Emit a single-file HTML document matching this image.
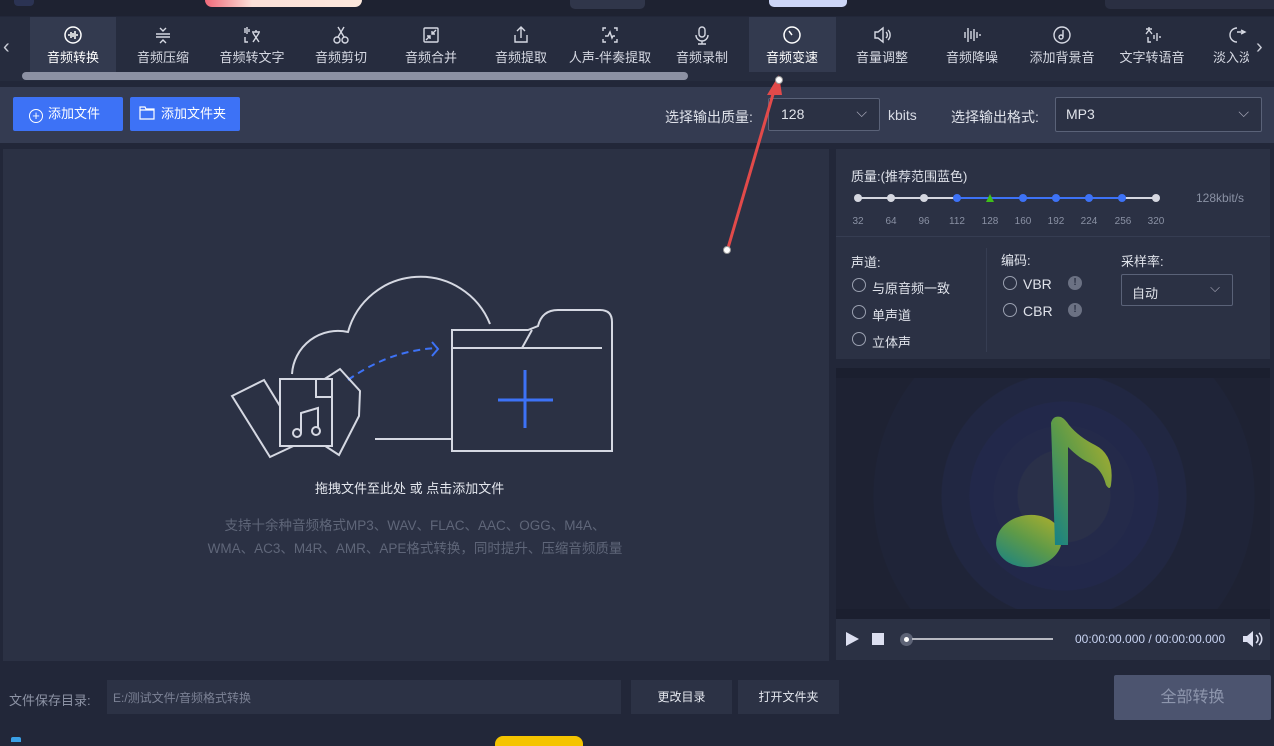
<!DOCTYPE html>
<html><head><meta charset="utf-8"><style>
*{margin:0;padding:0;box-sizing:border-box}
body{width:1274px;height:742px;background:#222739;font-family:"Liberation Sans","Noto Sans CJK SC",sans-serif;position:relative;overflow:hidden;color:#dfe3ee}
.a{position:absolute}
.tab{position:absolute;top:17px;height:55px;width:88px;text-align:center;font-size:13px;color:#d6d9e3;white-space:nowrap;overflow:hidden}
.tab svg{display:block;margin:8px auto 2px;width:20px;height:20px}
.btn{position:absolute;background:#3d72f6;color:#fff;font-size:13px;border-radius:2px;height:34px;line-height:34px}
.sel{position:absolute;border:1px solid #5a6278;background:#2b3144;border-radius:2px;color:#e0e3ea;font-size:14px}
.tick{position:absolute;top:216px;font-size:10px;color:#8a91a4;width:30px;text-align:center}
.dot{position:absolute;top:194px;width:8px;height:8px;border-radius:50%}
.rad{position:absolute;width:14px;height:14px;border:1px solid #9aa0b0;border-radius:50%}
.lbl{position:absolute;font-size:13px;color:#dfe2ea;white-space:nowrap}
</style></head><body>
<div class="a" style="left:0;top:0;width:1274px;height:16px;background:#1e2231"></div>
<div class="a" style="left:14px;top:0;width:20px;height:6px;background:#2b3353;border-radius:0 0 4px 4px"></div>
<div class="a" style="left:205px;top:0;width:157px;height:7px;background:linear-gradient(90deg,#f06a7a,#fbe0d8 30%,#fce8dd);border-radius:0 0 8px 8px"></div>
<div class="a" style="left:570px;top:0;width:75px;height:9px;background:#30364a;border-radius:0 0 5px 5px"></div>
<div class="a" style="left:769px;top:0;width:78px;height:7px;background:#cdd6f7;border-radius:0 0 5px 5px"></div>
<div class="a" style="left:1105px;top:0;width:169px;height:9px;background:#2a2f42;border-radius:0 0 0 5px"></div>
<div class="a" style="left:0;top:17px;width:1274px;height:64px;background:#262c3e"></div>
<div class="a" style="left:3px;top:36px;font-size:20px;color:#c9ccd6">‹</div>
<div class="a" style="left:1256px;top:36px;font-size:20px;color:#c9ccd6">›</div>
<div class="a" style="left:30px;top:17px;width:86px;height:55px;background:#333a4f"></div>
<div class="a" style="left:749px;top:17px;width:87px;height:55px;background:#333a4f"></div>
<div class="a" style="left:22px;top:72px;width:666px;height:8px;background:#8c91a3;border-radius:4px"></div>
<div class="tab" style="left:29px;color:#fff"><svg viewBox="0 0 20 20" fill="none" stroke="#fff" stroke-width="1.5"><circle cx="10" cy="10" r="8"/><path d="M6 9v2M8 7v6M10 8v4M12 6v8M14 9v2"/></svg>音频转换</div>
<div class="tab" style="left:119px"><svg viewBox="0 0 20 20" fill="none" stroke="#d6d9e3" stroke-width="1.4"><path d="M3 9h14M3 12h14M7 3l3 3 3-3M7 18l3-3 3 3"/></svg>音频压缩</div>
<div class="tab" style="left:208px"><svg viewBox="0 0 20 20" fill="none" stroke="#d6d9e3" stroke-width="1.4"><path d="M3 3v5M5 2v7M7 4v3M3 12v5h3M10 7h8M14 5v2M11 8l6 9M17 8l-6 9"/></svg>音频转文字</div>
<div class="tab" style="left:297px"><svg viewBox="0 0 20 20" fill="none" stroke="#d6d9e3" stroke-width="1.4"><circle cx="6" cy="15" r="3"/><circle cx="14" cy="15" r="3"/><path d="M7 12L13 2M13 12L7 2"/></svg>音频剪切</div>
<div class="tab" style="left:387px"><svg viewBox="0 0 20 20" fill="none" stroke="#d6d9e3" stroke-width="1.4"><rect x="3" y="3" width="14" height="14" rx="1"/><path d="M15 5l-4 4M11 6v3h3M5 15l4-4M6 11h3v3"/></svg>音频合并</div>
<div class="tab" style="left:477px"><svg viewBox="0 0 20 20" fill="none" stroke="#d6d9e3" stroke-width="1.4"><path d="M4 10v7h12v-7M10 13V2M6 6l4-4 4 4"/></svg>音频提取</div>
<div class="tab" style="left:566px"><svg viewBox="0 0 20 20" fill="none" stroke="#d6d9e3" stroke-width="1.4"><path d="M3 6V3h3M14 3h3v3M3 14v3h3M17 14v3h-3M5 11h3l2-4 2 6 1-2h2"/></svg>人声-伴奏提取</div>
<div class="tab" style="left:658px"><svg viewBox="0 0 20 20" fill="none" stroke="#d6d9e3" stroke-width="1.4"><rect x="7" y="2" width="6" height="10" rx="3"/><path d="M4 10a6 6 0 0012 0M10 16v3M6 19h8"/></svg>音频录制</div>
<div class="tab" style="left:748px;color:#fff"><svg viewBox="0 0 20 20" fill="none" stroke="#fff" stroke-width="1.5"><circle cx="10" cy="10" r="8"/><path d="M10 10L7 6"/></svg>音频变速</div>
<div class="tab" style="left:838px"><svg viewBox="0 0 20 20" fill="none" stroke="#d6d9e3" stroke-width="1.4"><path d="M3 7h3l5-4v14l-5-4H3zM14 7a4 4 0 010 6M16 5a7 7 0 010 10"/></svg>音量调整</div>
<div class="tab" style="left:928px"><svg viewBox="0 0 20 20" fill="none" stroke="#d6d9e3" stroke-width="1.4"><path d="M3 7v6M6 3v14M9 6v8M12 4v12M15 7v6M18 9v2"/></svg>音频降噪</div>
<div class="tab" style="left:1018px"><svg viewBox="0 0 20 20" fill="none" stroke="#d6d9e3" stroke-width="1.4"><circle cx="10" cy="10" r="8"/><circle cx="9" cy="12" r="2"/><path d="M11 12V5"/></svg>添加背景音</div>
<div class="tab" style="left:1108px"><svg viewBox="0 0 20 20" fill="none" stroke="#d6d9e3" stroke-width="1.4"><path d="M4 4h6M7 2v2M4 9l3-4 3 4M6 12v5h3M12 10v4M15 8v8M18 11v2"/></svg>文字转语音</div>
<div class="tab" style="left:1213px;width:36px;text-align:left"><svg viewBox="0 0 20 20" style="margin:8px 0 2px 16px" fill="none" stroke="#d6d9e3" stroke-width="1.4"><path d="M8 3a7 7 0 000 14M8 7h8M12 5l4 2-4 2"/></svg>淡入淡</div>
<div class="a" style="left:0;top:87px;width:1274px;height:56px;background:#343b51"></div>
<div class="btn" style="left:13px;top:97px;width:110px"><span style="display:inline-block;width:14px;height:14px;border:1px solid #fff;border-radius:50%;margin:0 5px 0 16px;vertical-align:-2px;text-align:center;line-height:11px;font-size:13px">+</span>添加文件</div>
<div class="btn" style="left:130px;top:97px;width:110px"><svg width="16" height="14" style="margin:0 6px 0 9px;vertical-align:-2px" fill="none" stroke="#fff" stroke-width="1.2"><path d="M1 1h5l1 2h8v10H1z M1 4h14"/></svg>添加文件夹</div>
<div class="lbl" style="left:665px;top:107px;font-size:14px">选择输出质量:</div>
<div class="sel" style="left:768px;top:98px;width:112px;height:33px;padding:7px 12px">128<span style="position:absolute;right:12px;top:5px;color:#aab">⌵</span></div>
<div class="lbl" style="left:888px;top:107px;font-size:14px;color:#d8dbe4">kbits</div>
<div class="lbl" style="left:951px;top:107px;font-size:14px">选择输出格式:</div>
<div class="sel" style="left:1055px;top:97px;width:207px;height:35px;padding:8px 10px">MP3<span style="position:absolute;right:12px;top:6px;color:#aab">⌵</span></div>
<div class="a" style="left:3px;top:149px;width:826px;height:512px;background:#2b3144"></div>
<svg class="a" style="left:220px;top:270px" width="400" height="200" viewBox="0 0 400 200" fill="none" stroke="#d5d8e2" stroke-width="2">
<path d="M72 104 A46 46 0 0 1 128 62 A75 75 0 0 1 270 54 M155 169 H232"/>
<path d="M232 60 h76 l10 -4 q4-16 20-16 h42 q12 0 12 12 V181 H232 Z M232 78 H382 M302 78 l10-18"/>
<path d="M305 100v58M278 130h55" stroke="#3d72f6" stroke-width="3"/>
<path d="M128 110 Q170 80 218 78" stroke="#3d72f6" stroke-dasharray="7 5"/>
<path d="M212 72l6 7-6 7" stroke="#3d72f6"/>
<path d="M12 126 L44 110 L82 172 L50 187 Z"/>
<path d="M100 112 l20-13 20 22 -1 25 -20 39 -23-15 z"/>
<rect x="60" y="109" width="52" height="67" fill="#2b3144"/>
<path d="M96 109v18h16M81 163V143l17-5v20" /><circle cx="77" cy="163" r="4"/><circle cx="96" cy="161" r="4"/>
</svg>
<div class="lbl" style="left:315px;top:478px;font-size:13px;color:#e4e7ee">拖拽文件至此处 或 点击添加文件</div>
<div class="a" style="left:180px;top:514px;width:470px;text-align:center;font-size:13.5px;color:#5f6679;line-height:23px">支持十余种音频格式MP3、WAV、FLAC、AAC、OGG、M4A、<br>WMA、AC3、M4R、AMR、APE格式转换，同时提升、压缩音频质量</div>
<svg class="a" style="left:720px;top:70px" width="70" height="190"><path d="M8 178 L56 14" stroke="#e24a4a" stroke-width="3"/><path d="M59 5 L47 25 L62 25Z" fill="#e24a4a"/><circle cx="59" cy="10" r="3.5" fill="#fff" stroke="#999"/><circle cx="7" cy="180" r="3.5" fill="#fff" stroke="#999"/></svg>
<div class="a" style="left:836px;top:149px;width:434px;height:210px;background:#2b3144"></div>
<div class="a" style="left:836px;top:236px;width:434px;height:1px;background:#363d52"></div>
<div class="a" style="left:986px;top:248px;width:1px;height:104px;background:#363d52"></div>
<div class="lbl" style="left:851px;top:166px">质量:(推荐范围蓝色)</div>
<div class="a" style="left:858px;top:197px;width:300px;height:2px;background:#d5d7e0"></div>
<div class="a" style="left:957px;top:197px;width:166px;height:2px;background:#3d72f6"></div>
<div class="dot" style="left:854px;background:#d5d7e0"></div><div class="dot" style="left:887px;background:#d5d7e0"></div><div class="dot" style="left:920px;background:#d5d7e0"></div><div class="dot" style="left:953px;background:#3d72f6"></div>
<div class="a" style="left:986px;top:194px;width:0;height:0;border-left:4px solid transparent;border-right:4px solid transparent;border-bottom:8px solid #3fbf1a"></div>
<div class="dot" style="left:1019px;background:#3d72f6"></div><div class="dot" style="left:1052px;background:#3d72f6"></div><div class="dot" style="left:1085px;background:#3d72f6"></div><div class="dot" style="left:1118px;background:#3d72f6"></div><div class="dot" style="left:1152px;background:#d5d7e0"></div>
<div class="tick" style="left:843px">32</div><div class="tick" style="left:876px">64</div><div class="tick" style="left:909px">96</div><div class="tick" style="left:942px">112</div><div class="tick" style="left:975px">128</div><div class="tick" style="left:1008px">160</div><div class="tick" style="left:1041px">192</div><div class="tick" style="left:1074px">224</div><div class="tick" style="left:1108px">256</div><div class="tick" style="left:1141px">320</div>
<div class="lbl" style="left:1196px;top:191px;font-size:12px;color:#8a91a4">128kbit/s</div>
<div class="lbl" style="left:851px;top:252px">声道:</div>
<div class="rad" style="left:852px;top:278px"></div><div class="lbl" style="left:872px;top:278px">与原音频一致</div>
<div class="rad" style="left:852px;top:305px"></div><div class="lbl" style="left:872px;top:305px">单声道</div>
<div class="rad" style="left:852px;top:332px"></div><div class="lbl" style="left:872px;top:332px">立体声</div>
<div class="lbl" style="left:1001px;top:250px">编码:</div>
<div class="rad" style="left:1003px;top:276px"></div><div class="lbl" style="left:1023px;top:276px;font-size:14px">VBR</div>
<div class="rad" style="left:1003px;top:303px"></div><div class="lbl" style="left:1023px;top:303px;font-size:14px">CBR</div>
<div class="a" style="left:1068px;top:276px;width:14px;height:14px;border-radius:50%;background:#6b7183;color:#2b3144;font-size:10px;text-align:center;line-height:14px;font-weight:bold">!</div>
<div class="a" style="left:1068px;top:303px;width:14px;height:14px;border-radius:50%;background:#6b7183;color:#2b3144;font-size:10px;text-align:center;line-height:14px;font-weight:bold">!</div>
<div class="lbl" style="left:1121px;top:251px">采样率:</div>
<div class="sel" style="left:1121px;top:274px;width:112px;height:32px;padding:8px 10px;font-size:13px">自动<span style="position:absolute;right:12px;top:5px;color:#aab">⌵</span></div>
<div class="a" style="left:836px;top:368px;width:434px;height:10px;background:#1b1f2f"></div>
<div class="a" style="left:836px;top:378px;width:434px;height:231px;background:radial-gradient(circle at 228px 118px,#2a3049 0,#2a3049 46px,#242a4a 47px,#242a4a 70px,#22284a 71px,#22284a 94px,#212742 95px,#212742 122px,#1f2438 123px,#1f2438 190px,#1e2233 191px)"></div>
<div class="a" style="left:836px;top:609px;width:434px;height:10px;background:#1b1f2f"></div>
<svg class="a" style="left:995px;top:415px" width="130" height="160" viewBox="0 0 130 160"><defs><linearGradient id="g" x1="0" y1="1" x2="1" y2="0"><stop offset="0" stop-color="#12808a"/><stop offset=".5" stop-color="#5e9a48"/><stop offset="1" stop-color="#b6b22a"/></linearGradient></defs>
<ellipse cx="34" cy="126" rx="33" ry="26" transform="rotate(-8 34 126)" fill="url(#g)"/>
<path d="M56 8 q2-8 10-6 q4 2 8 8 q10 12 26 20 q20 10 16 40 q-1 6 -5 0 q-4-16 -16-22 q-10-4 -22-16 V130 h-13 z" fill="url(#g)"/></svg>
<div class="a" style="left:836px;top:619px;width:434px;height:41px;background:#2b3144"></div>
<div class="a" style="left:846px;top:632px;width:0;height:0;border-top:7px solid transparent;border-bottom:7px solid transparent;border-left:13px solid #dcdff0"></div>
<div class="a" style="left:872px;top:633px;width:12px;height:12px;background:#dcdff0"></div>
<div class="a" style="left:900px;top:633px;width:13px;height:13px;border-radius:50%;background:#5d6376"></div>
<div class="a" style="left:904px;top:637px;width:5px;height:5px;border-radius:50%;background:#fff"></div>
<div class="a" style="left:912px;top:638px;width:141px;height:2px;background:#b7b9c2"></div>
<div class="lbl" style="left:1075px;top:632px;font-size:12px;color:#c8d3f2">00:00:00.000 / 00:00:00.000</div>
<svg class="a" style="left:1242px;top:630px" width="22" height="18"><path d="M1 6h4l6-5v16l-6-5H1z" fill="#dcdff0"/><path d="M14 5a5 5 0 010 8M17 3a8 8 0 010 12" stroke="#dcdff0" stroke-width="1.6" fill="none"/></svg>
<div class="lbl" style="left:9px;top:690px;color:#8d93a5">文件保存目录:</div>
<div class="a" style="left:107px;top:680px;width:514px;height:34px;background:#2c3245;font-size:12px;color:#7c8295;padding:9px 6px">E:/测试文件/音频格式转换</div>
<div class="a" style="left:631px;top:680px;width:101px;height:34px;background:#2c3245;font-size:12px;color:#e4e7ee;text-align:center;line-height:34px">更改目录</div>
<div class="a" style="left:738px;top:680px;width:101px;height:34px;background:#2c3245;font-size:12px;color:#e4e7ee;text-align:center;line-height:34px">打开文件夹</div>
<div class="a" style="left:1114px;top:675px;width:157px;height:45px;background:#4c546f;border-radius:2px;font-size:16px;color:#8e96ad;text-align:center;line-height:45px">全部转换</div>
<div class="a" style="left:11px;top:737px;width:10px;height:5px;background:#3aa0e6;border-radius:2px 2px 0 0"></div>
<div class="a" style="left:495px;top:736px;width:88px;height:10px;background:#f5c400;border-radius:8px 8px 0 0"></div>
</body></html>
